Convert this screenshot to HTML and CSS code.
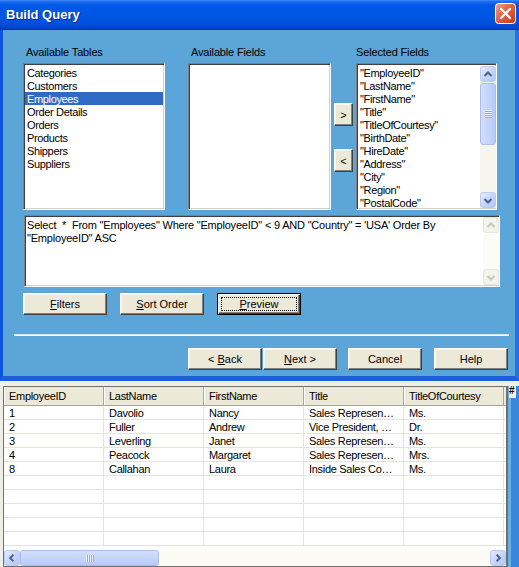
FILE: index.html
```html
<!DOCTYPE html>
<html>
<head>
<meta charset="utf-8">
<title>Build Query</title>
<link rel="stylesheet" href="styles.css">
</head>
<body>
<div class="screen">
  <div class="window">
    <div class="titlebar">
      <span class="title">Build Query</span>
      <svg class="close" width="21" height="21" viewBox="0 0 21 21">
        <defs>
          <linearGradient id="cg" x1="0" y1="0" x2="1" y2="1">
            <stop offset="0" stop-color="#f4a487"/>
            <stop offset="0.45" stop-color="#e2643d"/>
            <stop offset="1" stop-color="#c13a16"/>
          </linearGradient>
        </defs>
        <rect x="0.5" y="0.5" width="20" height="20" rx="3" fill="url(#cg)" stroke="#ffffff"/>
        <path d="M6 6 L15 15 M15 6 L6 15" stroke="#ffffff" stroke-width="2.3" stroke-linecap="round"/>
      </svg>
    </div>
    <div class="frame">
      <div class="dialog">
        <div class="pickers">
          <div class="col col-tables">
            <div class="label">Available Tables</div>
            <div class="listbox">
              <div class="items">
                <div class="item">Categories</div>
                <div class="item">Customers</div>
                <div class="item selected">Employees</div>
                <div class="item">Order Details</div>
                <div class="item">Orders</div>
                <div class="item">Products</div>
                <div class="item">Shippers</div>
                <div class="item">Suppliers</div>
              </div>
            </div>
          </div>
          <div class="col col-fields">
            <div class="label">Available Fields</div>
            <div class="listbox"><div class="items"></div></div>
          </div>
          <div class="movers">
            <button class="btn mover">&gt;</button>
            <button class="btn mover">&lt;</button>
          </div>
          <div class="col col-selected">
            <div class="label label-tight">Selected Fields</div>
            <div class="listbox">
              <div class="items">
                <div class="item">"EmployeeID"</div>
                <div class="item">"LastName"</div>
                <div class="item">"FirstName"</div>
                <div class="item">"Title"</div>
                <div class="item">"TitleOfCourtesy"</div>
                <div class="item">"BirthDate"</div>
                <div class="item">"HireDate"</div>
                <div class="item">"Address"</div>
                <div class="item">"City"</div>
                <div class="item">"Region"</div>
                <div class="item">"PostalCode"</div>
              </div>
              <div class="vscroll">
                <div class="sbtn"><svg width="14" height="15" viewBox="0 0 14 15"><path d="M3.5 9 L7 5.5 L10.5 9" stroke="#4d6185" stroke-width="2" fill="none"/></svg></div>
                <div class="thumb"><div class="grip"></div></div>
                <div class="track"></div>
                <div class="sbtn"><svg width="14" height="15" viewBox="0 0 14 15"><path d="M3.5 6 L7 9.5 L10.5 6" stroke="#4d6185" stroke-width="2" fill="none"/></svg></div>
              </div>
            </div>
          </div>
        </div>

        <div class="sqlbox">
          <div class="sqltext">Select  *  From "Employees" Where "EmployeeID" &lt; 9 AND "Country" = 'USA' Order By<br>"EmployeeID" ASC</div>
          <div class="vscroll disabled">
            <div class="sbtn"><svg width="14" height="15" viewBox="0 0 14 15"><path d="M3.5 9 L7 5.5 L10.5 9" stroke="#c9c7ba" stroke-width="2" fill="none"/></svg></div>
            <div class="track"></div>
            <div class="sbtn"><svg width="14" height="15" viewBox="0 0 14 15"><path d="M3.5 6 L7 9.5 L10.5 6" stroke="#c9c7ba" stroke-width="2" fill="none"/></svg></div>
          </div>
        </div>

        <div class="actions">
          <button class="btn"><u>F</u>ilters</button>
          <button class="btn"><u>S</u>ort Order</button>
          <button class="btn default"><u>P</u>review</button>
        </div>

        <div class="separator"></div>

        <div class="nav">
          <button class="btn nav-btn">&lt; <u>B</u>ack</button>
          <button class="btn nav-btn next"><u>N</u>ext &gt;</button>
          <button class="btn nav-btn cancel">Cancel</button>
          <button class="btn nav-btn help">Help</button>
        </div>
      </div>
    </div>
  </div>

  <div class="results">
    <div class="grid">
      <div class="ghead">
        <div class="gh">EmployeeID</div>
        <div class="gh">LastName</div>
        <div class="gh">FirstName</div>
        <div class="gh">Title</div>
        <div class="gh">TitleOfCourtesy</div>
      </div>
      <div class="gbody">
        <div class="grow"><div class="gc">1</div><div class="gc">Davolio</div><div class="gc">Nancy</div><div class="gc">Sales Represen…</div><div class="gc">Ms.</div></div>
        <div class="grow"><div class="gc">2</div><div class="gc">Fuller</div><div class="gc">Andrew</div><div class="gc">Vice President, …</div><div class="gc">Dr.</div></div>
        <div class="grow"><div class="gc">3</div><div class="gc">Leverling</div><div class="gc">Janet</div><div class="gc">Sales Represen…</div><div class="gc">Ms.</div></div>
        <div class="grow"><div class="gc">4</div><div class="gc">Peacock</div><div class="gc">Margaret</div><div class="gc">Sales Represen…</div><div class="gc">Mrs.</div></div>
        <div class="grow"><div class="gc">8</div><div class="gc">Callahan</div><div class="gc">Laura</div><div class="gc">Inside Sales Co…</div><div class="gc">Ms.</div></div>
        <div class="grow"><div class="gc"></div><div class="gc"></div><div class="gc"></div><div class="gc"></div><div class="gc"></div></div>
        <div class="grow"><div class="gc"></div><div class="gc"></div><div class="gc"></div><div class="gc"></div><div class="gc"></div></div>
        <div class="grow"><div class="gc"></div><div class="gc"></div><div class="gc"></div><div class="gc"></div><div class="gc"></div></div>
        <div class="grow"><div class="gc"></div><div class="gc"></div><div class="gc"></div><div class="gc"></div><div class="gc"></div></div>
        <div class="grow"><div class="gc"></div><div class="gc"></div><div class="gc"></div><div class="gc"></div><div class="gc"></div></div>
      </div>
      <div class="hscroll">
        <div class="sbtn"><svg width="15" height="14" viewBox="0 0 15 14"><path d="M9 3.5 L5.5 7 L9 10.5" stroke="#4d6185" stroke-width="2" fill="none"/></svg></div>
        <div class="hthumb"><div class="hgrip"></div></div>
        <div class="track"></div>
        <div class="sbtn"><svg width="15" height="14" viewBox="0 0 15 14"><path d="M6 3.5 L9.5 7 L6 10.5" stroke="#4d6185" stroke-width="2" fill="none"/></svg></div>
      </div>
    </div>
    <div class="edge"><span class="hash">#</span></div>
  </div>
</div>
</body>
</html>
```

FILE: styles.css
```css
* { box-sizing: border-box; }

html, body {
  margin: 0;
  padding: 0;
}

body {
  width: 519px;
  height: 567px;
  overflow: hidden;
  font-family: "Liberation Sans", Arial, sans-serif;
  font-size: 11px;
  color: #000;
  background: #efeee7;
}

.screen {
  width: 519px;
  height: 567px;
  display: flex;
  flex-direction: column;
}

/* ---------- window ---------- */
.window {
  width: 519px;
  flex: none;
}

.titlebar {
  height: 30px;
  display: flex;
  justify-content: space-between;
  align-items: flex-start;
  padding: 0 3px 0 6px;
  background: linear-gradient(to bottom,
    #3d8af7 0px, #1a69ef 2px, #0059e7 5px, #0055e3 18px,
    #004dd9 25px, #0042c4 28px, #0037a6 30px);
}

.title {
  line-height: 30px;
  font-size: 13px;
  font-weight: bold;
  color: #fff;
  text-shadow: 1px 1px 0 #0b2a86;
  white-space: nowrap;
}

.close {
  display: block;
  margin-top: 3px;
}

.frame {
  border-left: 3px solid #0b54de;
  border-right: 4px solid #2472dc;
  border-bottom: 5px solid #1d5fd4;
}

.dialog {
  height: 346px;
  background: #5ba5d9;
  padding: 15px 7px 0 20px;
}

/* ---------- pickers ---------- */
.pickers {
  display: flex;
  height: 165px;
}

.col {
  display: flex;
  flex-direction: column;
  flex: none;
}

.col-tables { width: 142px; }
.col-fields { width: 143px; margin-left: 23px; }
.col-selected { width: 141px; }

.label {
  height: 13px;
  line-height: 15px;
  margin-bottom: 5px;
  padding-left: 3px;
  white-space: nowrap;
  letter-spacing: -0.15px;
}

.label-tight { padding-left: 0; }

.listbox {
  height: 147px;
  display: flex;
  background: #fff;
  border: 1px solid;
  border-color: #808080 #ffffff #ffffff #808080;
  box-shadow: inset 1px 1px 0 #404040, inset -1px -1px 0 #d4d0c8;
  padding: 2px 0 1px 1px;
  overflow: hidden;
}

.items {
  flex: 1;
  overflow: hidden;
  padding-right: 1px;
}

.item {
  height: 13px;
  line-height: 15px;
  padding-left: 2px;
  white-space: nowrap;
  letter-spacing: -0.35px;
}

.item.selected {
  background: #316ac5;
  color: #fff;
}

.movers {
  width: 19px;
  flex: none;
  margin: 0 3px;
  padding-top: 58px;
  display: flex;
  flex-direction: column;
  gap: 23px;
}

/* ---------- scrollbars ---------- */
.vscroll {
  width: 16px;
  flex: none;
  display: flex;
  flex-direction: column;
  background: #f7f6ee;
}

.sbtn {
  width: 16px;
  height: 16px;
  flex: none;
  display: flex;
  align-items: center;
  justify-content: center;
  border: 1px solid #b9cbf3;
  border-radius: 3px;
  background: linear-gradient(135deg, #e4ecfe 0%, #c6d6fb 50%, #b2c6f5 100%);
}

.thumb {
  height: 62px;
  flex: none;
  margin-top: 1px;
  display: flex;
  align-items: center;
  justify-content: center;
  border: 1px solid #a9bfec;
  border-radius: 3px;
  background: linear-gradient(90deg, #d2dffd 0%, #c3d4fb 60%, #b5c9f6 100%);
}

.grip {
  width: 7px;
  height: 8px;
  background: repeating-linear-gradient(to bottom, #eef4ff 0 1px, #8fabe6 1px 2px);
}

.track { flex: 1; }

.vscroll.disabled { background: #fbfbf7; }

.vscroll.disabled .sbtn {
  border-color: #e8e6dc;
  background: #f4f3ee;
}

/* ---------- sql ---------- */
.sqlbox {
  margin: 5px 0 0 1px;
  width: 476px;
  height: 72px;
  display: flex;
  background: #fff;
  border: 1px solid;
  border-color: #808080 #ffffff #ffffff #808080;
  box-shadow: inset 1px 1px 0 #404040, inset -1px -1px 0 #d4d0c8;
  padding: 1px 0 1px 0;
}

.sqltext {
  flex: 1;
  padding: 2px 2px 0 2px;
  line-height: 13px;
  white-space: pre-wrap;
  letter-spacing: -0.2px;
}

/* ---------- buttons ---------- */
.btn {
  font-family: inherit;
  font-size: 11px;
  color: #000;
  background: #ece9d8;
  border: 1px solid;
  border-color: #ffffff #404040 #404040 #ffffff;
  box-shadow: inset -1px -1px 0 #808080, inset 1px 1px 0 #f6f5ee;
  padding: 0;
  margin: 0;
  height: 22px;
  line-height: 20px;
  text-align: center;
  white-space: nowrap;
}

.mover {
  width: 19px;
  height: 23px;
  font-size: 11px;
}

.actions {
  display: flex;
  gap: 13px;
  margin-top: 6px;
}

.actions .btn { width: 84px; }

.btn.default {
  position: relative;
  border-color: #000;
  box-shadow: inset 1px 1px 0 #ffffff, inset -1px -1px 0 #404040, inset -2px -2px 0 #808080;
}

.btn.default::after {
  content: "";
  position: absolute;
  left: 3px;
  top: 3px;
  right: 3px;
  bottom: 3px;
  border: 1px dotted #000;
}

.separator {
  margin: 19px 0 0 -9px;
  width: 495px;
  height: 2px;
  border-top: 1px solid #d7e8f5;
  border-bottom: 1px solid #ffffff;
}

.nav {
  display: flex;
  justify-content: flex-end;
  margin-top: 12px;
}

.nav-btn { width: 74px; }
.nav-btn.next { margin-left: 1px; }
.nav-btn.cancel { margin-left: 11px; }
.nav-btn.help { margin-left: 12px; }

/* ---------- results grid ---------- */
.results {
  flex: 1;
  display: flex;
  padding: 5px 0 0 3px;
  background: #efeee7;
}

.grid {
  width: 505px;
  height: 181px;
  flex: none;
  display: flex;
  flex-direction: column;
  background: #fff;
  border: 1px solid #6f6f6f;
  border-right-width: 2px;
}

.ghead {
  height: 19px;
  flex: none;
  display: flex;
  background: #ece9d8;
  border-bottom: 1px solid #a8a695;
}

.gh {
  width: 100px;
  flex: none;
  padding-left: 5px;
  line-height: 18px;
  border-right: 1px solid #a8a695;
  box-shadow: inset 1px 0 0 #ffffff;
  white-space: nowrap;
  overflow: hidden;
  letter-spacing: -0.3px;
}

.gbody {
  flex: 1;
  overflow: hidden;
}

.grow {
  height: 14px;
  display: flex;
  border-bottom: 1px solid #e4e3dc;
}

.gc {
  width: 100px;
  flex: none;
  padding: 1px 0 0 5px;
  line-height: 12px;
  border-right: 1px solid #e4e3dc;
  white-space: nowrap;
  overflow: hidden;
  letter-spacing: -0.3px;
}

.hscroll {
  height: 16px;
  flex: none;
  display: flex;
  background: #fbfaf5;
}

.hthumb {
  width: 139px;
  flex: none;
  display: flex;
  align-items: center;
  justify-content: center;
  border: 1px solid #a9bfec;
  border-radius: 3px;
  background: linear-gradient(to bottom, #d2dffd 0%, #c3d4fb 60%, #b5c9f6 100%);
}

.hgrip {
  width: 8px;
  height: 7px;
  background: repeating-linear-gradient(to right, #eef4ff 0 1px, #8fabe6 1px 2px);
}

.edge {
  flex: 1;
  background: linear-gradient(to right, #6aaee6 0 3px, #3a86dc 3px);
}

.hash {
  display: block;
  width: 7px;
  height: 14px;
  margin: -2px 0 0 1px;
  line-height: 14px;
  font-size: 10px;
  font-weight: bold;
  background: #f3f3ef;
  overflow: hidden;
}
```
